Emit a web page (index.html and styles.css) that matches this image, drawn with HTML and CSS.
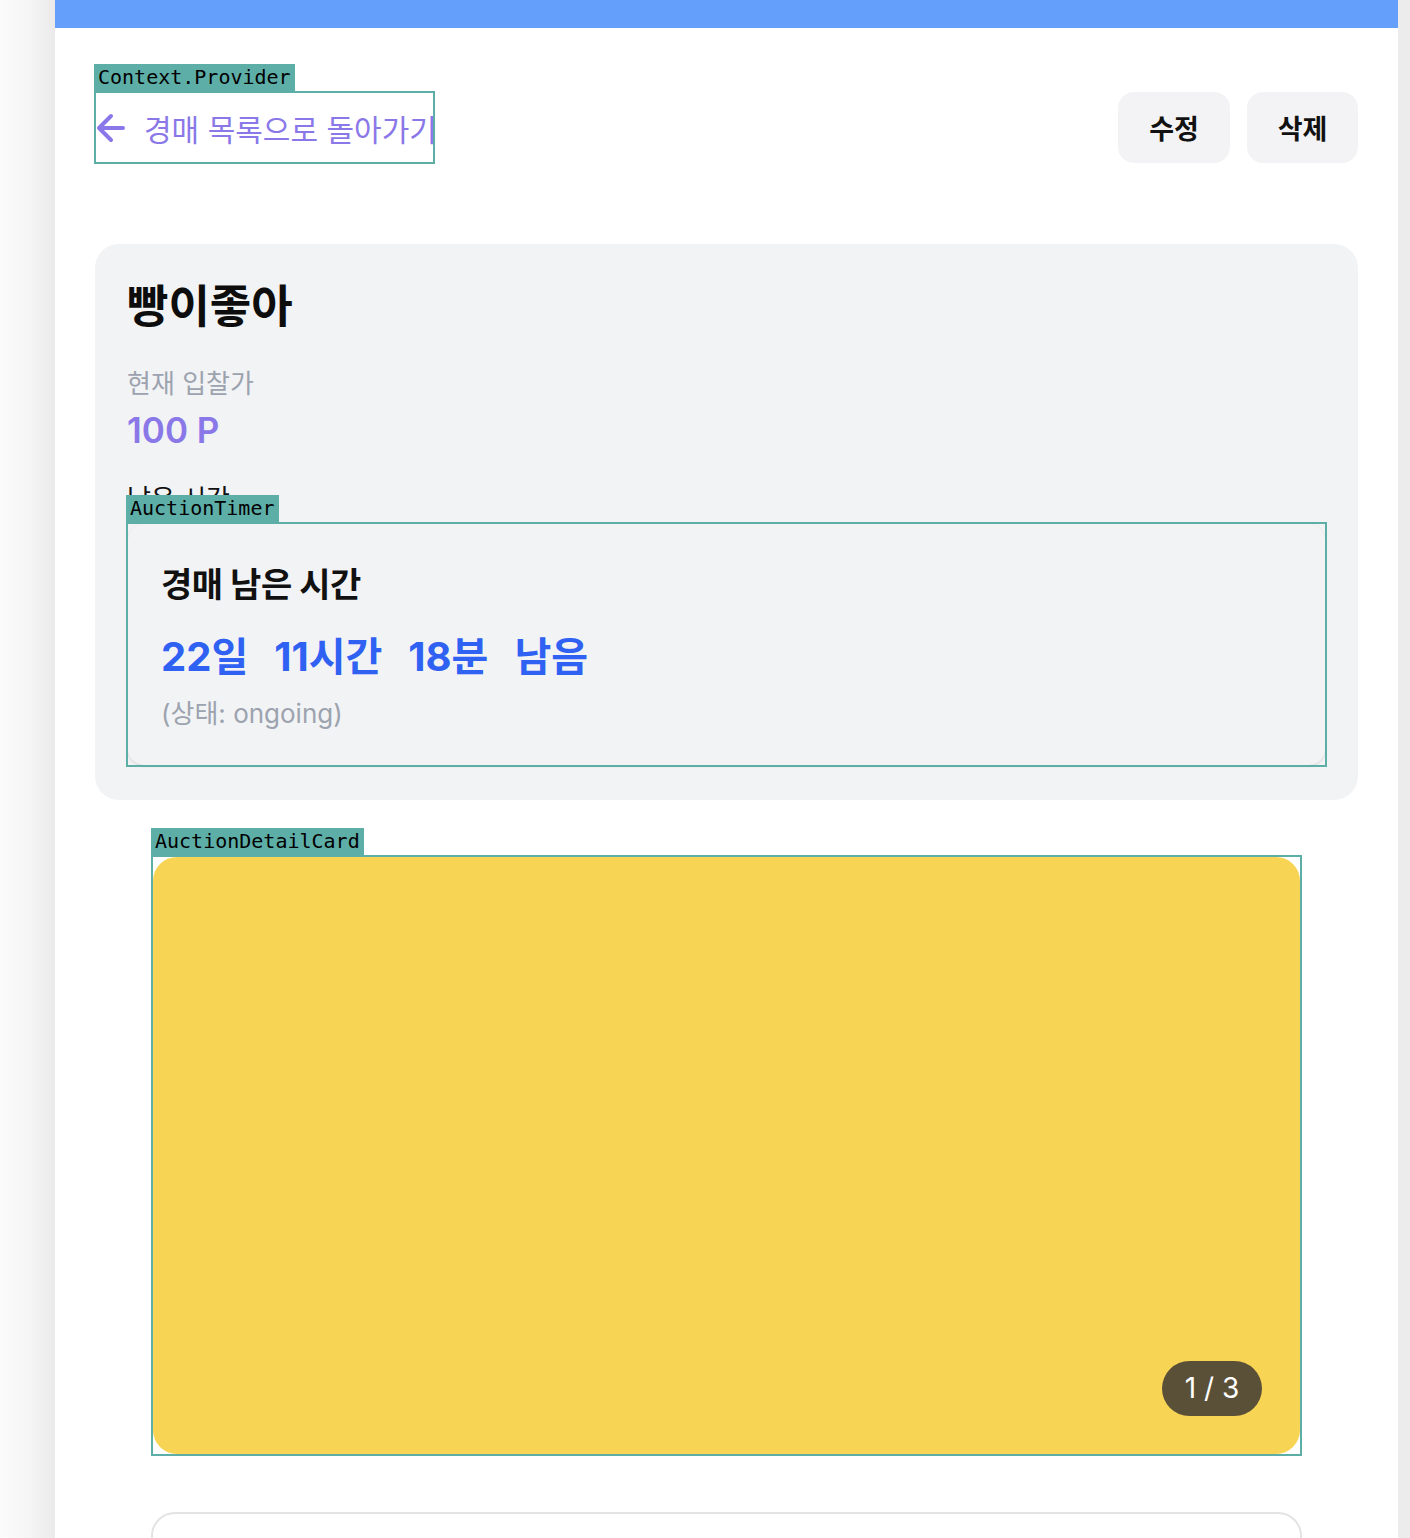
FILE: index.html
```html
<!DOCTYPE html>
<html lang="ko">
<head>
<meta charset="utf-8">
<title>경매 상세</title>
<link rel="stylesheet" href="styles.css">
</head>
<body>
<div class="shell">
  <div class="gutter-left"></div>
  <main class="page">
    <div class="topbar"></div>
    <div class="content">
      <header class="header">
        <div class="dev-box dev-provider" data-name="Context.Provider">
          <a class="back-link" href="#">
            <svg class="back-icon" viewBox="0 0 28 28" width="28" height="28" aria-hidden="true">
              <path d="M2 14H26M14 2L2 14L14 26" fill="none" stroke="currentColor" stroke-width="4" stroke-linecap="round" stroke-linejoin="round"/>
            </svg>
            <span>경매 목록으로 돌아가기</span>
          </a>
        </div>
        <div class="actions">
          <button class="btn">수정</button>
          <button class="btn">삭제</button>
        </div>
      </header>

      <section class="summary">
        <h1 class="title">빵이좋아</h1>
        <div class="label">현재 입찰가</div>
        <div class="price">100 P</div>
        <div class="label label-dark">남은 시간</div>
        <div class="dev-box dev-timer" data-name="AuctionTimer">
          <div class="timer">
            <div class="timer-title">경매 남은 시간</div>
            <div class="timer-value"><span>22일</span><span>11시간</span><span>18분</span><span>남음</span></div>
            <div class="timer-status">(상태: ongoing)</div>
          </div>
        </div>
      </section>

      <div class="detail-wrap">
        <div class="dev-box dev-detail" data-name="AuctionDetailCard">
          <div class="gallery">
            <div class="counter">1 / 3</div>
          </div>
        </div>
      </div>

      <div class="detail-wrap">
        <div class="next-card"></div>
      </div>
    </div>
  </main>
  <div class="gutter-right"></div>
</div>
</body>
</html>
```

FILE: styles.css
```css
* { box-sizing: border-box; }
html, body { margin: 0; padding: 0; }
body {
  font-family: Inter, "Noto Sans CJK KR", sans-serif;
  color: #111;
  background: #ececec;
  height: 1538px;
  overflow: hidden;
}
.shell {
  display: flex;
  min-height: 1538px;
}
.gutter-left {
  width: 55px;
  flex: none;
  background: linear-gradient(to right, #fbfbfb 0%, #f6f6f6 50%, #eaeaea 100%);
}
.gutter-right {
  width: 12px;
  flex: none;
  background: #ececec;
}
.page {
  flex: 1;
  background: #fff;
}
.topbar {
  height: 28px;
  background: #64a0fb;
}
.content {
  padding: 64px 40px 0 40px;
}
.header {
  display: flex;
  justify-content: space-between;
  align-items: flex-start;
}
.dev-box {
  position: relative;
  outline: 2px solid #5eaea8;
}
.dev-box::before {
  content: attr(data-name);
  position: absolute;
  left: -2px;
  top: -29px;
  height: 27px;
  padding: 0 4px;
  background: #5eaea8;
  color: #000;
  font-family: "DejaVu Sans Mono", monospace;
  font-size: 20px;
  line-height: 27px;
  z-index: 2;
}
.dev-provider {
  margin: 1px 0 0 1px;
  width: 337px;
  height: 69px;
  display: flex;
  align-items: center;
}
.back-link {
  display: flex;
  align-items: center;
  gap: 19px;
  color: #8a78e8;
  text-decoration: none;
  font-size: 30px;
  white-space: nowrap;
  margin-left: 1px;
}
.back-icon { flex: none; overflow: visible; }
.actions {
  display: flex;
  gap: 17px;
}
.btn {
  height: 71px;
  width: 112px;
  border: none;
  border-radius: 16px;
  background: #f3f3f5;
  font-family: Inter, "Noto Sans CJK KR", sans-serif;
  font-size: 27px;
  font-weight: 700;
  color: #111;
}
.btn:last-child { width: 111px; }

.summary {
  margin-top: 81px;
  background: #f2f3f5;
  border-radius: 24px;
  padding: 32px 32px 35px 32px;
}
.title {
  margin: 0;
  font-size: 45px;
  font-weight: 700;
  line-height: 62px;
  color: #0d0d0d;
}
.label {
  margin-top: 28px;
  font-size: 26px;
  line-height: 36px;
  color: #9ca3af;
}
.price {
  margin-top: 6px;
  font-size: 35px;
  font-weight: 600;
  line-height: 44px;
  color: #8a78e8;
}
.label-dark {
  color: #111;
  margin-top: 32px;
  line-height: 30px;
}
.dev-timer {
  margin: 10px 1px 0 1px;
}
.timer {
  border-radius: 16px;
  box-shadow: 0 1px 3px rgba(0,0,0,0.12);
  background: #f2f3f5;
  padding: 40px 33px 32px 33px;
  height: 241px;
}
.timer-title {
  font-size: 34px;
  font-weight: 700;
  line-height: 42px;
  color: #111;
  letter-spacing: -0.5px;
}
.timer-value {
  display: flex;
  gap: 26px;
  margin-top: 26px;
  font-size: 40px;
  font-weight: 700;
  line-height: 50px;
  color: #2f61f3;
}
.timer-status {
  margin-top: 14px;
  font-size: 26px;
  line-height: 36px;
  color: #9ca3af;
}
.detail-wrap {
  display: flex;
  justify-content: center;
  margin-top: 57px;
}
.dev-detail {
  width: 1147px;
  margin-left: 0;
}
.gallery {
  position: relative;
  height: 597px;
  background: #f7d454;
  border-radius: 24px;
}
.counter {
  position: absolute;
  right: 38px;
  bottom: 38px;
  width: 100px;
  height: 55px;
  border-radius: 28px;
  background: #5a5037;
  color: #fff;
  font-size: 28px;
  line-height: 55px;
  text-align: center;
}
.next-card {
  width: 1151px;
  height: 120px;
  border: 2px solid #e3e3e3;
  border-radius: 24px;
  background: #fff;
}
.detail-wrap + .detail-wrap { margin-top: 58px; }
```
